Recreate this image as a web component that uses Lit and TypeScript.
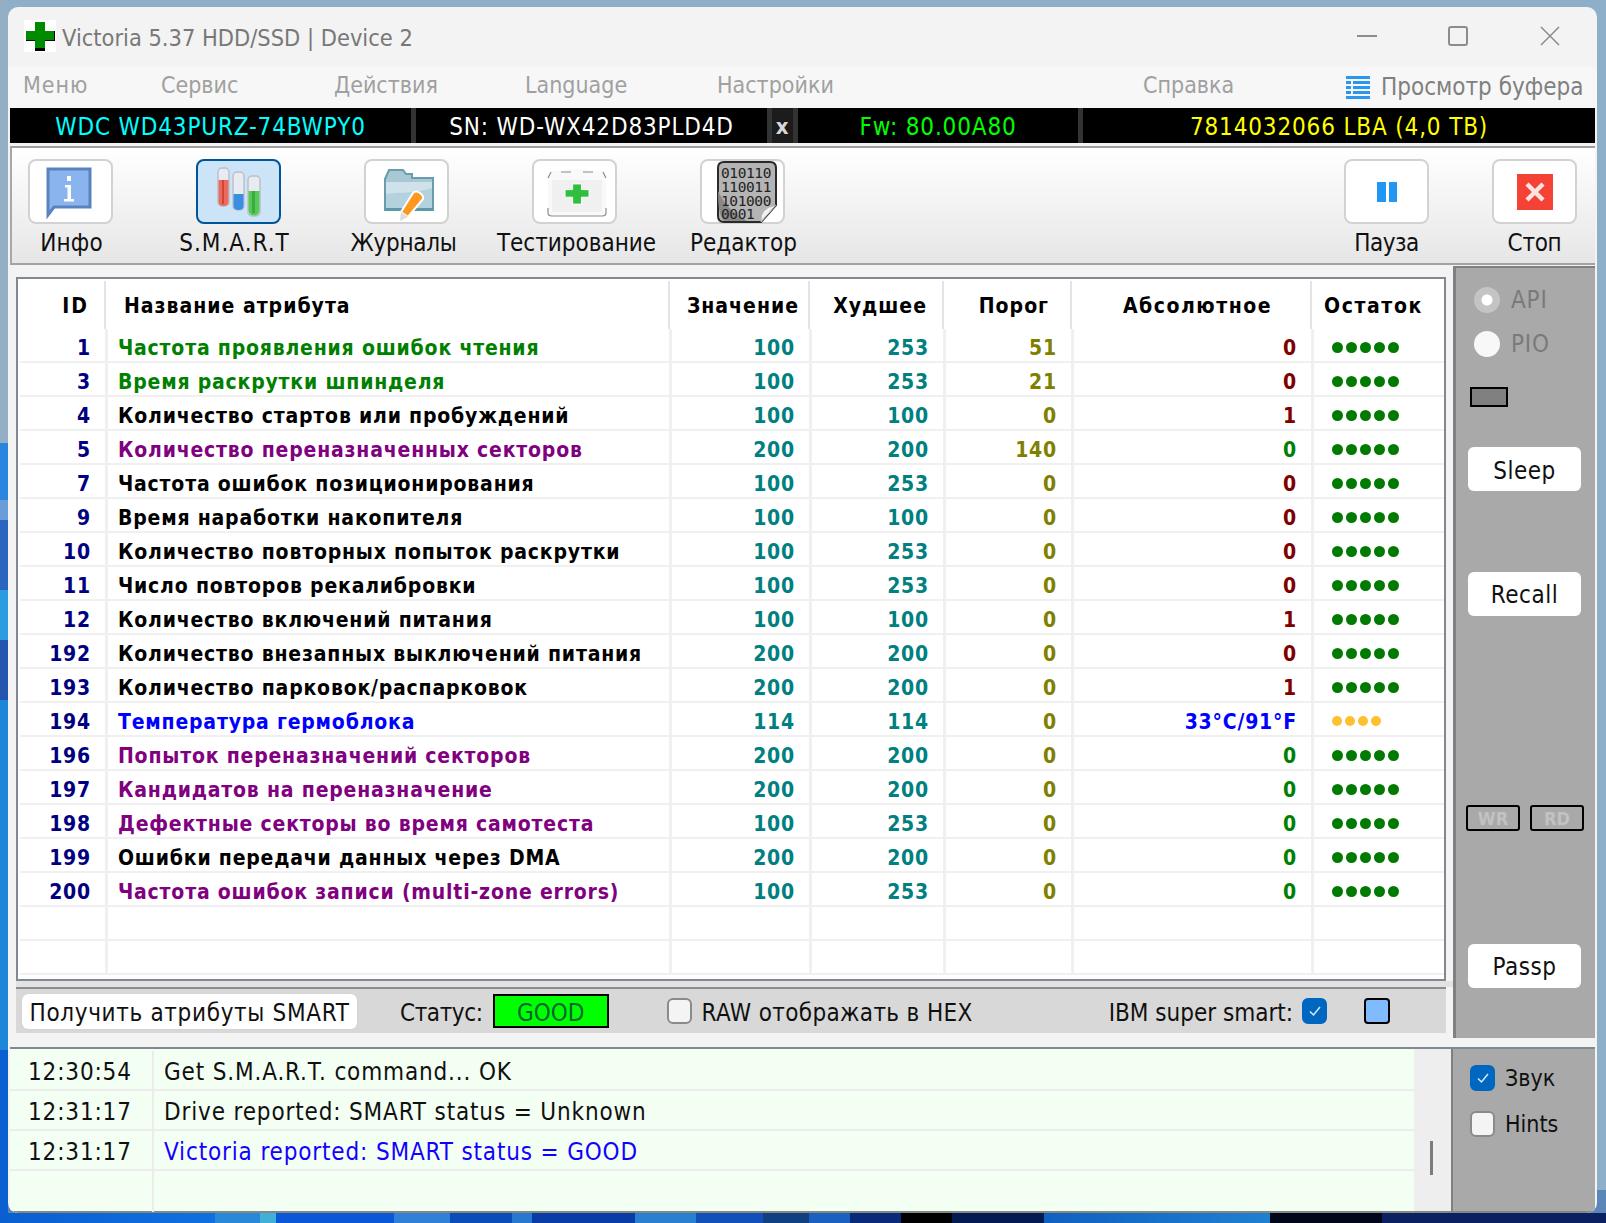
import { LitElement, html, css, svg } from "lit";
import { customElement } from "lit/decorators.js";

type Row = [number, string, string, number, number, number, string, string, string];
const rows: Row[] = [
  [1, "Частота проявления ошибок чтения", "g", 100, 253, 51, "0", "r", "d5"],
  [3, "Время раскрутки шпинделя", "g", 100, 253, 21, "0", "r", "d5"],
  [4, "Количество стартов или пробуждений", "k", 100, 100, 0, "1", "r", "d5"],
  [5, "Количество переназначенных секторов", "p", 200, 200, 140, "0", "g", "d5"],
  [7, "Частота ошибок позиционирования", "k", 100, 253, 0, "0", "r", "d5"],
  [9, "Время наработки накопителя", "k", 100, 100, 0, "0", "r", "d5"],
  [10, "Количество повторных попыток раскрутки", "k", 100, 253, 0, "0", "r", "d5"],
  [11, "Число повторов рекалибровки", "k", 100, 253, 0, "0", "r", "d5"],
  [12, "Количество включений питания", "k", 100, 100, 0, "1", "r", "d5"],
  [192, "Количество внезапных выключений питания", "k", 200, 200, 0, "0", "r", "d5"],
  [193, "Количество парковок/распарковок", "k", 200, 200, 0, "1", "r", "d5"],
  [194, "Температура гермоблока", "b", 114, 114, 0, "33°C/91°F", "b", "y4"],
  [196, "Попыток переназначений секторов", "p", 200, 200, 0, "0", "g", "d5"],
  [197, "Кандидатов на переназначение", "p", 200, 200, 0, "0", "g", "d5"],
  [198, "Дефектные секторы во время самотеста", "p", 100, 253, 0, "0", "g", "d5"],
  [199, "Ошибки передачи данных через DMA", "k", 200, 200, 0, "0", "g", "d5"],
  [200, "Частота ошибок записи (multi-zone errors)", "p", 100, 253, 0, "0", "g", "d5"],
];

const icons = {
  info: svg`<svg class="i-info" width="44" height="48" viewBox="0 0 44 48"><path d="M1 1H43V39H7L1 47Z" fill="#8ab4ee" stroke="#5a82c0" stroke-width="3"/><rect x="20" y="8" width="4" height="5" fill="#fff"/><path d="M18 17H24V31H27V33.500H17V31H20.500V19.500H18Z" fill="#fff"/></svg>`,
  smart: svg`<svg width="44" height="50" viewBox="0 0 44 50">
    <rect x="1" y="1" width="11" height="38" rx="4" fill="#e8ebf2" stroke="#bcc0c8" stroke-width="1.500"/><path d="M1.500 13H11.500V35q0 4 -5 4t-5 -4Z" fill="#ea6a60"/><rect x="5" y="13" width="2" height="24" fill="#d0453a"/>
    <rect x="16" y="5" width="11" height="38" rx="4" fill="#e8ebf2" stroke="#bcc0c8" stroke-width="1.500"/><path d="M16.500 27H26.500V39q0 4 -5 4t-5 -4Z" fill="#3a8ee2"/>
    <rect x="31" y="9" width="12" height="40" rx="4" fill="#e8ebf2" stroke="#bcc0c8" stroke-width="1.500"/><path d="M31.500 24H42.500V43q0 5.500 -5.500 5.500t-5.500 -5.500Z" fill="#58c858"/><rect x="35" y="24" width="3" height="22" fill="#38ac40"/>
  </svg>`,
  journal: svg`<svg class="i-j" width="50" height="54" viewBox="0 0 50 54">
    <path d="M1 11L5 2H19L22 6H28V10H49V42H1Z" fill="#a8c8d4" stroke="#6a9cb0" stroke-width="2"/>
    <path d="M2 14H48V41H2Z" fill="#cfe2ea"/><path d="M2 41V26C14 24 30 26 48 20V41Z" fill="#b4d2de"/>
    <path d="M1 41.500H49" stroke="#5a98ac" stroke-width="3"/>
    <path d="M17 44L29 25Q32 22 36 25T39 31L24 49Z" fill="#ff9820" stroke="#fff" stroke-width="2"/><path d="M17 44L24 49L16 53Z" fill="#ddd"/>
  </svg>`,
  test: svg`<svg class="i-t" width="60" height="50" viewBox="0 0 60 50">
    <path d="M1 10L5 3H18L20 1H40L42 3H55L59 10V44Q59 48 55 48H5Q1 48 1 44Z" fill="#f9f9f9"/>
    <path d="M1 10L4 4M14 4H24M36 4H46M56 4L59 10M1 40V45Q1 48 5 48H55Q59 48 59 45V40" fill="none" stroke="#8c8c8c" stroke-width="1.200"/>
    <rect x="5" y="12" width="50" height="32" fill="#f0f0f0"/>
    <path d="M21 15H35V24H47V36H35V47H21V36H9V24H21Z" transform="translate(12.400 6.500) scale(0.630)" fill="#2fbf3f" stroke="#fff" stroke-width="1.500"/>
  </svg>`,
  editor: svg`<svg class="i-e" width="60" height="62" viewBox="0 0 60 62">
    <path d="M7 1H53Q59 1 59 7V44L44 61H7Q1 61 1 55V7Q1 1 7 1Z" fill="#b4b4b4" stroke="#2a2a2a" stroke-width="2"/>
    <path d="M1 30Q1 55 7 60H30C12 50 6 40 1 30Z" fill="#888"/>
    <path d="M44 61Q42 47 59 44L44 61Z" fill="#f0f0f0" stroke="#aaa"/>
    <g class="bits"><text x="4" y="17">010110</text><text x="4" y="31">110011</text><text x="4" y="45">101000</text><text x="4" y="58">0001</text></g>
  </svg>`,
  pause: svg`<svg width="20" height="20" viewBox="0 0 20 20"><rect x="0" width="9" height="20" fill="#2196f3"/><rect x="12" width="8" height="20" fill="#2196f3"/></svg>`,
  stop: svg`<svg width="36" height="36" viewBox="0 0 36 36"><rect width="36" height="36" fill="#f44336"/><path d="M10 10L26 26M26 10L10 26" stroke="#fbe4e2" stroke-width="4.500"/></svg>`,
};

const tools = [
  { key: "info", label: "Инфо", dx: 1, gap: 83, ls: 0.2 },
  { key: "smart", label: "S.M.A.R.T", dx: -4, on: true, gap: 83, ls: 1 },
  { key: "journal", label: "Журналы", dx: -3, gap: 83, ls: -0.3 },
  { key: "test", label: "Тестирование", dx: 2, gap: 83, ls: 0 },
  { key: "editor", label: "Редактор", dx: 1, gap: 0, ls: 0 },
];

const check = svg`<svg width="14" height="12" viewBox="0 0 14 12"><path d="M2 6.500L5.500 10L12 2" fill="none" stroke="#dbeafc" stroke-width="1.500"/></svg>`;

@customElement("app-root")
export class AppRoot extends LitElement {
  static styles = css`
    :host {
      display: block;
      width: 1606px;
      height: 1223px;
      box-sizing: border-box;
      padding: 7px 9px 10px 8px;
      overflow: hidden;
      background:
        linear-gradient(90deg, #0a5ed0 0, #1070e0 215px, #2a88d8 215px 260px, #40b0d8 260px 276px, #0a58d8 276px 394px, #3080d8 394px 450px, #0a4cb8 450px 512px, #2878d0 512px 532px, #0a3ca8 532px 635px, #2a80d0 635px 696px, #1050b8 696px 763px, #104080 763px 809px, #1a60c0 809px 850px, #082a78 850px 901px, #000 901px 952px, #021a50 952px 1044px, #1060c0 1044px, #2080d0 1270px, #01061a 1270px 1382px, #0a2060 1382px) bottom / 100% 10px no-repeat,
        linear-gradient(180deg, #93afc6 0 443px, #2a85e0 443px 500px, #6a9cd8 500px 520px, #2a66c0 520px 590px, #2a9ce0 590px 640px, #2456b0 640px 700px, #1e86d8 700px 1050px, #0a60d0 1050px) left top / 8px 100% no-repeat,
        linear-gradient(180deg, #8eafca 0 1190px, #5a86b8 1190px);
      font-family: "DejaVu Sans Condensed", "DejaVu Sans", sans-serif;
      font-stretch: condensed;
      font-size: 24px;
      color: #101010;
    }
    .win {
      height: 1206px;
      display: flex;
      flex-direction: column;
      background: #f3f3f3;
      border-radius: 10px;
      overflow: hidden;
    }
    .title {
      height: 60px;
      flex: none;
      display: flex;
      align-items: center;
      padding-left: 16px;
      color: #787878;
    }
    .logo { width: 32px; height: 32px; background: #fff; flex: none; margin-right: 6px; margin-top: -2px; }
    .title-text { font-size: 23.400px; flex: 1; margin-top: 2px; }
    .ctl { display: flex; margin-right: 37px; margin-top: -2px; }
    .ctl svg { display: block; }
    .ctl .min { margin-right: 71px; }
    .ctl .max { margin-right: 72px; }
    .menu {
      height: 41px;
      flex: none;
      box-sizing: border-box;
      padding-bottom: 6px;
      background: #f7f7f7;
      display: grid;
      grid-template-columns: 138px 173px 191px 192px 426px 203px 35px auto;
      align-items: center;
      padding-left: 15px;
      color: #a0a0a0;
      font-size: 23px;
    }
    .menu > div:first-child { letter-spacing: 1px; }
    .menu .buf { color: #808080; font-size: 24px; margin-top: 4px; }
    .menu svg { display: block; margin-top: 6px; }
    .drive {
      height: 35px;
      flex: none;
      margin: 0 2px;
      background: #000;
      display: grid;
      grid-template-columns: 401px 356px 26px 285px 1fr;
      align-items: center;
      text-align: center;
      white-space: nowrap;
      font-size: 24px;
      letter-spacing: 0.850px;
    }
    .drive > div { height: 100%; display: flex; align-items: center; justify-content: center; box-sizing: border-box; padding-top: 2px; }
    .drive > div + div { border-left: 5px solid #333; }
    .cy { color: #00ffff; }
    .wh { color: #fff; }
    .gx { color: #d8d8d8; font-weight: bold; font-size: 22px; background: #1c1c1c; }
    .lm { color: #00ff00; }
    .yl { color: #ffff00; }
    .tb {
      margin: 3px 2px 0;
      flex: none;
      border-top: 2px solid #9e9e9e;
      border-bottom: 2px solid #a2a2a2;
      border-left: 2px solid #a8a8a8;
      background: linear-gradient(#ffffff, #e6e6e6);
      display: flex;
      justify-content: space-between;
      padding: 11px 18px 0 16px;
      box-sizing: content-box;
      height: 104px;
    }
    .tb-g { display: flex; }
    .tool { width: 85px; display: flex; flex-direction: column; align-items: center; }
    .tool-box {
      width: 85px;
      height: 65px;
      box-sizing: border-box;
      background: #fff;
      border: 2px solid #d2d2d2;
      border-radius: 8px;
      display: flex;
      align-items: center;
      justify-content: center;
      flex: none;
    }
    .tool-box.on { background: #cce4f7; border-color: #005499; }
    .tool-box svg { display: block; flex: none; overflow: visible; }
    .i-j { margin: 6px 0 0 4px; }
    .i-t { margin: 2px 0 0 4px; }
    .i-e { margin-left: 8px; }
    .i-info { margin-left: -3px; }
    .bits text { font-family: "DejaVu Sans Mono", monospace; font-size: 14.500px; fill: #222; letter-spacing: -0.400px; }
    .tool-label { white-space: nowrap; margin-top: 4px; line-height: 30px; font-size: 24px; }
    .pz { letter-spacing: -0.500px; }
    .sp { letter-spacing: -0.300px; }
    .main { height: 782px; flex: none; display: flex; margin: 0 2px; }
    .left { width: 1443px; flex: none; display: flex; flex-direction: column; padding: 12px 0 0 6px; box-sizing: border-box; }
    .grid {
      width: 1430px;
      height: 704px;
      box-sizing: border-box;
      flex: none;
      border: 2px solid #828890;
      background: #fff;
      padding: 2px 0 0 2px;
      overflow: hidden;
    }
    .head, .row { display: grid; }
    .head { grid-template-columns: 84px 564px 140px 134px 128px 240px 131px; height: 48px; align-items: center; font-weight: bold; font-size: 21px; color: #000; letter-spacing: 1px; }
    .head > div { height: 100%; display: flex; align-items: center; box-sizing: border-box; white-space: nowrap; padding-top: 2px; }
    .head > div + div { border-left: 2px solid #e4e4e4; }
    .h-end { justify-content: flex-end; }
    .h1 { padding-right: 15px; letter-spacing: 2px; }
    .h2 { padding-left: 18px; }
    .h3 { padding-right: 9px; }
    .h4 { padding-right: 15px; }
    .h5 { padding-right: 21px; }
    .h6 { padding-right: 38px; letter-spacing: 1.500px; }
    .head .h7 { padding-left: 12px; letter-spacing: 1.600px; }
    .row { grid-template-columns: 85px 564px 140px 134px 128px 240px 130px; height: 34px; box-sizing: border-box; border-bottom: 2px solid #f0f0f0; font-weight: bold; font-size: 21px; line-height: 32px; white-space: nowrap; letter-spacing: 0.800px; }
    .row > div { box-sizing: border-box; height: 32px; padding-top: 3px; }
    .row > div + div { border-left: 3px solid #f0f0f0; }
    .num { text-align: right; padding-right: 14px; }
    .nm { padding-left: 10px; }
    .c-id { color: #000080; }
    .c-g { color: #008000; }
    .c-k { color: #000; }
    .c-p { color: #800080; }
    .c-b { color: #0000ff; }
    .c-r { color: #800000; }
    .c-t { color: #008080; }
    .c-o { color: #808000; }
    .row .dots { display: flex; align-items: center; padding: 4px 0 0 18px; gap: 3px; }
    .dot { width: 11px; height: 11px; border-radius: 50%; background: #007a00; flex: none; }
    .dots.y { gap: 3px; }
    .dots.y .dot { width: 10px; height: 10px; background: #ffc030; }
    .rule { height: 6px; flex: none; background: #e2e2e2; }
    .status {
      width: 1430px;
      height: 46px;
      box-sizing: border-box;
      flex: none;
      border-top: 2px solid #8c8c8c;
      background: #d8d8d8;
      display: flex;
      align-items: center;
      white-space: nowrap;
      padding-left: 6px;
    }
    .btn { background: #fff; border-radius: 6px; display: flex; align-items: center; justify-content: center; flex: none; white-space: nowrap; box-shadow: 0 0 1px #bbb; box-sizing: border-box; padding-top: 3px; }
    .get { width: 335px; height: 35px; letter-spacing: 0.670px; }
    .st { margin-left: 43px; letter-spacing: -0.400px; padding-top: 4px; }
    .good { width: 116px; height: 34px; box-sizing: border-box; border: 2px solid #000; background: #00ff00; display: flex; align-items: center; justify-content: center; margin-left: 10px; color: #063; flex: none; padding-top: 3px; }
    .cb { width: 25px; height: 26px; box-sizing: border-box; border: 2px solid #8a8a8a; border-radius: 6px; background: #f4f4f4; flex: none; display: flex; align-items: center; justify-content: center; }
    .cb.on { background: #0067c0; border-color: #0067c0; }
    .cb svg { display: block; }
    .raw { margin-left: 58px; }
    .raw-t { margin-left: 10px; letter-spacing: 0.350px; padding-top: 4px; }
    .ibm { margin-left: 136px; padding-top: 4px; }
    .ibm-c { margin-left: 9px; }
    .swatch { width: 26px; height: 26px; box-sizing: border-box; border: 2px solid #000; border-radius: 4px; background: #80bbff; margin-left: 37px; flex: none; }
    .side {
      width: 142px;
      height: 772px;
      box-sizing: border-box;
      flex: none;
      border-left: 3px solid #808080;
      border-top: 2px solid #808080;
      margin-top: 1px;
      background: #a9a9a9;
      display: flex;
      flex-direction: column;
      padding: 19px 14px 0 12px;
      color: #7a7a7a;
    }
    .radio { display: flex; align-items: center; height: 26px; margin-left: 6px; letter-spacing: 0.800px; }
    .rb { width: 26px; height: 26px; border-radius: 50%; flex: none; margin-right: 11px; box-sizing: border-box; }
    .rb.sel { background: radial-gradient(circle, #fff 0 5px, #c4c4c4 6px); }
    .rb.off { background: #f8f8f8; }
    .pio { margin-top: 18px; }
    .led { width: 38px; height: 20px; box-sizing: border-box; border: 2px solid #000; background: #808080; margin: 30px 0 0 2px; }
    .sb { width: 113px; height: 44px; color: #101010; letter-spacing: 0.500px; }
    .sleep { margin-top: 40px; }
    .recall { margin-top: 81px; padding-top: 1px; }
    .wr { display: flex; gap: 10px; margin: 189px -6px 0 -2px; }
    .wr div { width: 54px; height: 26px; flex: none; box-sizing: border-box; border: 2px solid #000; border-radius: 3px; color: #c2c2c2; font-weight: bold; font-size: 18px; display: flex; align-items: center; justify-content: center; }
    .passp { margin-top: 113px; padding-top: 1px; }
    .logw { flex: 1; display: flex; margin: 0 2px 0; border-top: 2px solid #808890; border-bottom: 2px solid #828882; border-bottom-left-radius: 8px; background: #eeeeee; min-height: 0; }
    .log { width: 1404px; flex: none; background: #f3fff3; padding-top: 2px; box-sizing: border-box; letter-spacing: 0.850px; }
    .lr { display: grid; grid-template-columns: 142px 1fr; height: 40px; box-sizing: border-box; border-bottom: 2px solid #ececec; line-height: 38px; }
    .lr.last { border-bottom: 0; height: 41px; }
    .lr > div { box-sizing: border-box; height: 100%; padding-top: 2px; }
    .lr > div + div { border-left: 2px solid #ececec; padding-left: 10px; }
    .lr > div:first-child { padding-left: 18px; }
    .blue { color: #1400ff; }
    .track { width: 37px; flex: none; position: relative; display: flex; justify-content: center; padding-top: 92px; box-sizing: border-box; }
    .thumb { width: 3px; height: 34px; background: #7c7c7c; margin-right: 2px; }
    .side2 { flex: 1; background: #a9a9a9; border-left: 2px solid #808080; padding: 16px 0 0 17px; display: flex; flex-direction: column; }
    .opt { display: flex; align-items: center; gap: 10px; font-size: 23px; height: 26px; }
    .opt + .opt { margin-top: 20px; }
  `;

  render() {
    return html`
      <div class="win">
        <div class="title">
          <svg class="logo" viewBox="0 0 32 32"><path d="M11 2H21V11H31V21H21V31H11V21H2V11H11Z" fill="#000"/><path d="M11 2H21V11H30V20H21V28H11V20H2V11H11Z" fill="#008a00"/></svg>
          <div class="title-text">Victoria 5.37 HDD/SSD | Device 2</div>
          <div class="ctl">
            <svg class="min" width="20" height="20" viewBox="0 0 20 20"><path d="M0 10H20" stroke="#8c8c8c" stroke-width="2"/></svg>
            <svg class="max" width="20" height="20" viewBox="0 0 20 20"><rect x="1" y="1" width="18" height="18" rx="2" fill="none" stroke="#8c8c8c" stroke-width="2"/></svg>
            <svg width="20" height="20" viewBox="0 0 20 20"><path d="M1 1L19 19M19 1L1 19" stroke="#8c8c8c" stroke-width="1.500"/></svg>
          </div>
        </div>
        <div class="menu">
          <div>Меню</div><div>Сервис</div><div>Действия</div><div>Language</div><div>Настройки</div><div>Справка</div>
          <svg width="24" height="24" viewBox="0 0 24 24"><g fill="#2b95f0"><rect y="0" width="24" height="3"/><rect y="5" width="5" height="3"/><rect x="7" y="5" width="17" height="3"/><rect y="10" width="5" height="3"/><rect x="7" y="10" width="17" height="3"/><rect y="15" width="5" height="3"/><rect x="7" y="15" width="17" height="3"/><rect y="20" width="24" height="3"/></g></svg>
          <div class="buf">Просмотр буфера</div>
        </div>
        <div class="drive">
          <div class="cy">WDC WD43PURZ-74BWPY0</div>
          <div class="wh">SN: WD-WX42D83PLD4D</div>
          <div class="gx">x</div>
          <div class="lm">Fw: 80.00A80</div>
          <div class="yl">7814032066 LBA (4,0 TB)</div>
        </div>
        <div class="tb">
          <div class="tb-g">
            ${tools.map(
              (t) => html`<div class="tool" style="margin-right:${t.gap}px">
                <div class="tool-box ${t.on ? "on" : ""}">${icons[t.key as keyof typeof icons]}</div>
                <div class="tool-label" style="transform:translateX(${t.dx}px);letter-spacing:${t.ls}px">${t.label}</div>
              </div>`
            )}
          </div>
          <div class="tb-g">
            <div class="tool" style="margin-right:63px">
              <div class="tool-box">${icons.pause}</div>
              <div class="tool-label pz">Пауза</div>
            </div>
            <div class="tool">
              <div class="tool-box">${icons.stop}</div>
              <div class="tool-label sp">Стоп</div>
            </div>
          </div>
        </div>
        <div class="main">
          <div class="left">
            <div class="grid">
              <div class="head">
                <div class="h-end h1">ID</div>
                <div class="h2">Название атрибута</div>
                <div class="h-end h3">Значение</div>
                <div class="h-end h4">Худшее</div>
                <div class="h-end h5">Порог</div>
                <div class="h-end h6">Абсолютное</div>
                <div class="h7">Остаток</div>
              </div>
              ${rows.map(
                (r) => html`<div class="row">
                  <div class="num c-id">${r[0]}</div>
                  <div class="nm c-${r[2]}">${r[1]}</div>
                  <div class="num c-t">${r[3]}</div>
                  <div class="num c-t">${r[4]}</div>
                  <div class="num c-o">${r[5]}</div>
                  <div class="num c-${r[7]}">${r[6]}</div>
                  <div class="dots ${r[8] === "y4" ? "y" : ""}">
                    ${Array.from({ length: r[8] === "y4" ? 4 : 5 }, () => html`<span class="dot"></span>`)}
                  </div>
                </div>`
              )}
              ${[0, 1].map(
                () => html`<div class="row"><div></div><div></div><div></div><div></div><div></div><div></div><div></div></div>`
              )}
            </div>
            <div class="rule"></div>
            <div class="status">
              <div class="btn get">Получить атрибуты SMART</div>
              <div class="st">Статус:</div>
              <div class="good">GOOD</div>
              <div class="cb raw"></div>
              <div class="raw-t">RAW отображать в HEX</div>
              <div class="ibm">IBM super smart:</div>
              <div class="cb on ibm-c">${check}</div>
              <div class="swatch"></div>
            </div>
          </div>
          <div class="side">
            <div class="radio"><span class="rb sel"></span>API</div>
            <div class="radio pio"><span class="rb off"></span>PIO</div>
            <div class="led"></div>
            <div class="btn sb sleep">Sleep</div>
            <div class="btn sb recall">Recall</div>
            <div class="wr"><div>WR</div><div>RD</div></div>
            <div class="btn sb passp">Passp</div>
          </div>
        </div>
        <div class="logw">
          <div class="log">
            <div class="lr"><div>12:30:54</div><div>Get S.M.A.R.T. command... OK</div></div>
            <div class="lr"><div>12:31:17</div><div>Drive reported: SMART status = Unknown</div></div>
            <div class="lr"><div>12:31:17</div><div class="blue">Victoria reported: SMART status = GOOD</div></div>
            <div class="lr last"><div></div><div></div></div>
          </div>
          <div class="track"><div class="thumb"></div></div>
          <div class="side2">
            <div class="opt"><div class="cb on">${check}</div>Звук</div>
            <div class="opt"><div class="cb"></div>Hints</div>
          </div>
        </div>
      </div>
    `;
  }
}
